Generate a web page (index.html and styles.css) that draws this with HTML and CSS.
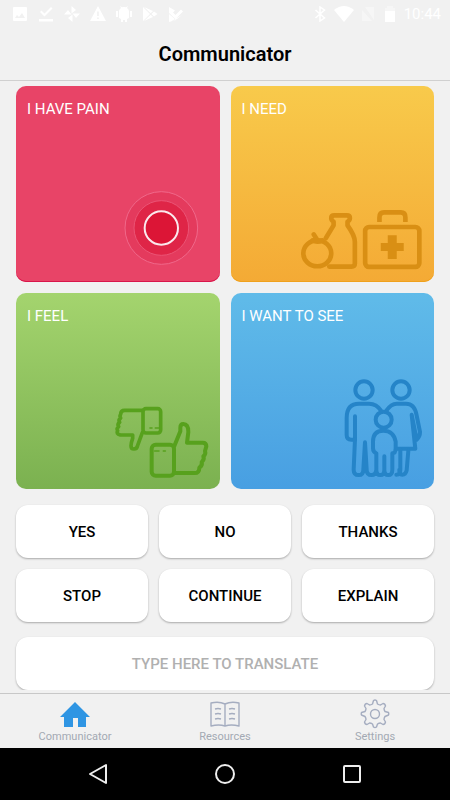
FILE: index.html
```html
<!DOCTYPE html>
<html lang="en">
<head>
<meta charset="utf-8">
<meta name="viewport" content="width=device-width, initial-scale=1">
<title>Communicator</title>
<link rel="stylesheet" href="styles.css">
</head>
<body>
<div class="status">
  <div class="status-group notices">
    <svg class="status-icon" viewBox="0 0 16 16"><path fill-rule="evenodd" d="M2 1h12a1 1 0 0 1 1 1v12a1 1 0 0 1-1 1H2a1 1 0 0 1-1-1V2a1 1 0 0 1 1-1zM3 12h10L10 7l-3 4-2-2z"/></svg>
    <svg class="status-icon" viewBox="0 0 16 16"><path d="M1 13h14v2.500H1zM2 6l1.500-1.500L6.500 7.500 13 1l1.500 1.500-8 8z"/></svg>
    <svg class="status-icon" viewBox="0 0 16 16"><path d="M7.500 0L12 4 7.500 7.500zM16 7.500L12 12 8.500 7.500zM8.500 16L4 12 8.500 8.500zM0 8.500L4 4 7.500 8.500z"/></svg>
    <svg class="status-icon" viewBox="0 0 16 16"><path fill-rule="evenodd" d="M8 0l8 15H0zM7.200 5.500h1.600V10H7.200zM7.200 11.500h1.600V13H7.200z"/></svg>
    <svg class="status-icon" viewBox="0 0 16 16"><path d="M3 5a5 5 0 0 1 2-3L4 0l2 1.300a6 6 0 0 1 4 0L12 0l-1 2a5 5 0 0 1 2 3v7l-2 1v3H9v-2H7v2H5v-3l-2-1zM0 5h2v6H0zM14 5h2v6h-2z"/></svg>
    <svg class="status-icon" viewBox="0 0 16 16"><path d="M1 1l7 7-7 7zM2 1l9 4-2.300 2.300zM2 15l9-4-2.300-2.300zM12 5.500L15.500 8 12 10.500 9.500 8z"/></svg>
    <svg class="status-icon" viewBox="0 0 16 16"><path d="M1 1l6 3.500L5 6.500l2.500 2.500L13 3.500 15 5.500 7.500 13 1 7zM1 8l7 6-7 2zM9 13l5-4-12 7z"/></svg>
  </div>
  <div class="status-group">
    <svg class="status-icon" viewBox="0 0 16 16"><path class="thin" d="M3.500 4l9 8L8 15V1l4.500 3-9 8"/></svg>
    <svg class="status-icon wide" viewBox="0 0 20 16"><path d="M0 4Q10-4 20 4L10 16z"/></svg>
    <svg class="status-icon faint" viewBox="0 0 16 16"><path d="M5 1h9v13zM2 4l10 11H2z"/></svg>
    <svg class="status-icon" viewBox="0 0 16 16"><path d="M3 5h10v11H3z"/><path class="faint" d="M3 2h2V0h6v2h2v3H3z"/></svg>
    <span>10:44</span>
  </div>
</div>
<header class="header"><h1>Communicator</h1></header>
<main class="content">
  <div class="cards">
    <button class="card pain" type="button">
      <span>I HAVE PAIN</span>
      <svg class="art" width="75" height="74" viewBox="41 32 225 222">
        <circle cx="153" cy="143" r="109" fill="#e43a5d" stroke="#f0688a" stroke-width="3"/>
        <circle cx="153" cy="143" r="82" fill="#df2547" stroke="#eb5475" stroke-width="3"/>
        <circle cx="153" cy="143" r="50" fill="#dc1536" stroke="#fbe9ed" stroke-width="6"/>
      </svg>
    </button>
    <button class="card need" type="button">
      <span>I NEED</span>
      <svg class="art" width="123" height="62" viewBox="30 30 370 186">
        <g fill="none" stroke="#d98f14" stroke-width="14" stroke-linecap="round" stroke-linejoin="round">
          <ellipse cx="82" cy="163" rx="42" ry="39"/>
          <path d="M71 106l11 17M68 124q14 8 29 0"/>
          <path d="M108 117l23-38V68q-7-4-7-11 0-8 9-8h38q9 0 9 8 0 7-7 11v11q22 31 22 49v66q0 9-10 9h-67"/>
          <rect x="226" y="84" width="163" height="120" rx="12"/>
          <path stroke-linecap="butt" d="M269 69V55q0-15 14-15h50q14 0 14 15v14"/>
        </g>
        <path fill="#d98f14" d="M294 109h27v23h21v24h-21v24h-27v-24h-21v-24h21z"/>
      </svg>
    </button>
    <button class="card feel" type="button">
      <span>I FEEL</span>
      <svg class="art" width="95" height="72" viewBox="28 33 285 216">
        <g fill="none" stroke="#57a11d" stroke-width="11" stroke-linecap="round" stroke-linejoin="round">
          <path d="M114 46H60q-12 0-12 12-4 5 0 11-8 6-3 13-8 6-3 13-8 6-3 12-6 9 8 13h37v10q-5 14-5 22 0 10 9 10t11-11l14-38"/>
          <rect x="115" y="41" width="53" height="73" rx="9"/>
          <path stroke-width="5" d="M136 99h6M152 99h10"/>
          <rect x="141" y="149" width="67" height="93" rx="12" stroke-width="12"/>
          <path stroke-width="12" d="M209 153l18-44V98q0-11 9-11 15 0 15 24l-4 32h47q11 0 11 11l-4 14q4 9-5 16 4 10-5 17 3 10-7 17 0 16-14 16h-61"/>
          <path stroke-width="5" d="M150 168h13M176 168h6"/>
        </g>
      </svg>
    </button>
    <button class="card see" type="button">
      <span>I WANT TO SEE</span>
      <svg class="art" width="79" height="99" viewBox="28 28 237 297">
        <g fill="none" stroke="#2584c8" stroke-width="12" stroke-linecap="round" stroke-linejoin="round">
          <circle cx="88" cy="61" r="26"/>
          <circle cx="199" cy="61" r="26"/>
          <circle cx="147" cy="150" r="24"/>
          <path d="M61 140v70H50q-14 0-14-14v-51q0-43 37-43h30q23 0 36 21"/>
          <path d="M61 208l-4 92q0 16 15 16 14 0 14-16l5-82 5 82q0 16 15 16 12 0 14-16v-49q-10-4-10-15v-20q0-33 31-33t37 33v20q0 15-10 15v49q0 16-12 16t-12-16v-40 40q0 16-12 16t-12-16"/>
          <path d="M155 123q14-21 31-21h28q25 0 31 31l11 54q0 14-10 23l-15-75 11 102h-54"/>
          <path d="M197 240v60q0 15-12 15M221 243l-5 59q-3 13-13 13t-9-15"/>
        </g>
      </svg>
    </button>
  </div>
  <div class="phrases">
    <button class="phrase" type="button">YES</button>
    <button class="phrase" type="button">NO</button>
    <button class="phrase" type="button">THANKS</button>
    <button class="phrase" type="button">STOP</button>
    <button class="phrase" type="button">CONTINUE</button>
    <button class="phrase" type="button">EXPLAIN</button>
  </div>
  <input class="translate" type="text" aria-label="Type here to translate" placeholder="TYPE HERE TO TRANSLATE">
</main>
<nav class="tabs">
  <a class="tab" href="#communicator">
    <svg width="30" height="30" viewBox="0 0 30 30"><path fill="#2f95e3" d="M15 3l15 15h-4v10h-8v-9h-5v9H4V18H0z"/></svg>
    <span>Communicator</span>
  </a>
  <a class="tab" href="#resources">
    <svg width="30" height="30" viewBox="0 0 30 30"><path fill="none" stroke="#a5adc0" stroke-width="1.400" stroke-linejoin="round" d="M15 5q-6-3-14-1v23q8-2 14 0 6-2 14 0V4q-8-2-14 1v22M5 10q3-1 6 0M5 15q3-1 6 0M5 20q3-1 6 0M19 10q3-1 6 0M19 15q3-1 6 0M19 20q3-1 6 0"/></svg>
    <span>Resources</span>
  </a>
  <a class="tab" href="#settings">
    <svg width="30" height="30" viewBox="0 0 30 30"><g fill="none" stroke="#a5adc0" stroke-width="1.400" stroke-linejoin="round"><path d="M13.500 1.500Q15 .5 16.500 1.500L17.500 5Q19 6 20.500 6L23 4.500Q25 4.500 25.500 7L24 9.500Q24 11 25 12.500L28.500 13.500Q29 15 28.500 16L25 17.500Q24 19 24 20.500L25.500 23Q25 25.500 23 25.500L20.500 24Q19 24 17.500 25L16.500 28Q15 29 13.500 28L12.500 25Q11 24 9.500 24L7 25.500Q5 25.500 4.500 23L6 20.500Q6 19 5 17.500L1.500 16Q1 15 1.500 13.500L5 12.500Q6 11 6 9.500L4.500 7Q5 4.500 7 4.500L9.500 6Q11 6 12.500 5Z"/><circle cx="15" cy="15" r="4.500"/></g></svg>
    <span>Settings</span>
  </a>
</nav>
<div class="system">
  <button type="button" aria-label="Back"><svg width="20" height="22" viewBox="0 0 20 22"><path d="M18 2v18L2 11z"/></svg></button>
  <button type="button" aria-label="Home"><svg width="22" height="22" viewBox="0 0 22 22"><circle cx="11" cy="11" r="9"/></svg></button>
  <button type="button" aria-label="Recent apps"><svg width="20" height="20" viewBox="0 0 20 20"><rect x="2" y="2" width="16" height="16" rx="1"/></svg></button>
</div>
</body>
</html>
```
FILE: styles.css
```css
* {
  box-sizing: border-box;
}

body {
  margin: 0;
  min-height: 100vh;
  display: flex;
  flex-direction: column;
  background: #f1f1f1;
  color: #000;
  font-family: Roboto, "Liberation Sans", sans-serif;
}

button,
input {
  font: inherit;
  border: 0;
}

.status {
  display: flex;
  justify-content: space-between;
  align-items: center;
  height: 28px;
  padding: 0 9px 0 12px;
  color: #fff;
  font-size: 15px;
  line-height: 28px;
}

.status-group {
  display: flex;
  align-items: center;
  gap: 6px;
}

.notices {
  gap: 10px;
}

.status-icon {
  width: 16px;
  height: 16px;
  fill: #fff;
}

.wide {
  width: 20px;
}

.faint {
  opacity: 0.4;
}

.thin {
  fill: none;
  stroke: #fff;
  stroke-width: 1.5;
}

.header {
  height: 53px;
  border-bottom: 1px solid #d0d0d0;
  text-align: center;
}

.header h1 {
  margin: 0;
  font-size: 20px;
  line-height: 52px;
  font-weight: 600;
}

.content {
  flex: 1;
  overflow: hidden;
  padding: 5px 16px 0;
}

.cards {
  display: grid;
  grid-template-columns: 1fr 1fr;
  gap: 11px;
}

.card {
  display: flex;
  flex-direction: column;
  justify-content: space-between;
  align-items: flex-start;
  height: 196px;
  padding: 11px;
  border-radius: 10px;
  color: #fff;
  font-size: 15px;
  line-height: 24px;
  text-align: left;
}

.art {
  align-self: flex-end;
}

.pain {
  padding-right: 21px;
  padding-bottom: 17px;
  background: #e84467;
  box-shadow: inset 0 -1px #d9154b;
}

.need {
  background: linear-gradient(#f8ca4b, #f4aa35);
  box-shadow: inset 0 -1px #f0a11c;
}

.feel {
  background: linear-gradient(#a4d46e, #7bb150);
}

.see {
  background: linear-gradient(#60bbe9, #489fe2);
}

.phrases {
  display: grid;
  grid-template-columns: repeat(3, 1fr);
  gap: 11px;
  margin: 16px 0 15px;
}

.phrase,
.translate {
  height: 53px;
  padding: 0;
  border-radius: 12px;
  background: #fff;
  box-shadow: 0 1px 2px rgba(0, 0, 0, 0.3);
  color: #000;
  font-size: 15px;
  font-weight: 500;
  text-align: center;
}

.translate {
  display: block;
  width: 100%;
}

.translate::placeholder {
  color: #b0b0b0;
  opacity: 1;
}

.tabs {
  display: grid;
  grid-template-columns: repeat(3, 1fr);
  height: 55px;
  margin-top: 3px;
  padding-top: 5px;
  border-top: 1px solid #c8c8c8;
}

.tab {
  display: flex;
  flex-direction: column;
  align-items: center;
  gap: 1px;
  color: #a3a9b3;
  font-size: 11px;
  line-height: 14px;
  text-decoration: none;
}

.system {
  display: flex;
  justify-content: center;
  gap: 63px;
  height: 52px;
  background: #000;
}

.system button {
  display: flex;
  align-items: center;
  justify-content: center;
  width: 64px;
  padding: 0;
  background: none;
}

.system svg {
  fill: none;
  stroke: #eee;
  stroke-width: 2;
  stroke-linejoin: round;
}
```
